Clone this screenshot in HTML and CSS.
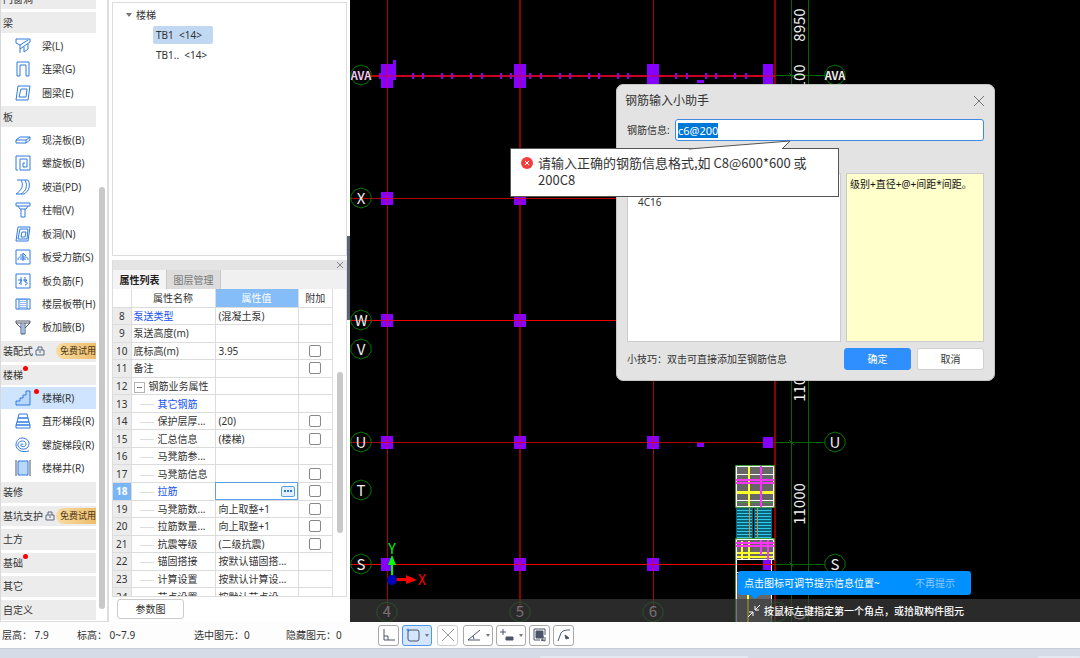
FILE: index.html
```html
<!DOCTYPE html>
<html lang="zh-CN">
  <head>
    <meta charset="UTF-8" />
    <meta name="viewport" content="width=device-width, initial-scale=1.0" />
    <title>钢筋输入小助手</title>
    <link rel="stylesheet" href="styles.css">
  </head>
  <body>
    <div class="workspace">
      <nav class="nav">
        <div class="nav-list">
          <div class="group">门窗洞</div>
          <div class="group">梁</div>
          <a class="item" href="#"><svg class="icon" viewBox="0 0 16 16"><path d="M1 5V1h14v3L5 11M1 5l4 2 8-5M5 7v8M9 9v5l4-3V6" /></svg>梁(L)</a>
          <a class="item" href="#"><svg class="icon" viewBox="0 0 16 16"><path d="M2 15V1h12v14h-3V4H5v11z" /></svg>连梁(G)</a>
          <a class="item" href="#"><svg class="icon" viewBox="0 0 16 16"><path d="M3 1h12l-2 14H1zM6 4h6l-1 8H4z" /></svg>圈梁(E)</a>
          <div class="group">板</div>
          <a class="item" href="#"><svg class="icon" viewBox="0 0 16 16"><path d="M1 8l4-3h10v3l-4 3H1zM1 8h10v3M11 8l4-3" /></svg>现浇板(B)</a>
          <a class="item" href="#"><svg class="icon" viewBox="0 0 16 16"><path d="M3 15H1V1h14v14H5V4h7v8H8V8h2" /></svg>螺旋板(B)</a>
          <a class="item" href="#"><svg class="icon" viewBox="0 0 16 16"><path d="M2 1h4c3 5 1 10-5 14h5c5-3 7-8 4-14H6M10 1h3c3 5 1 11-4 14H6" /></svg>坡道(PD)</a>
          <a class="item" href="#"><svg class="icon" viewBox="0 0 16 16"><path d="M1 1h14v3H1zM3 4l2 3h6l2-3M6 7v8h4V7" /></svg>柱帽(V)</a>
          <a class="item" href="#"><svg class="icon" viewBox="0 0 16 16"><path d="M3 1h12l-2 14H1zM5 3h8l-1 10H3zM7 6h4l-1 5H6z" /></svg>板洞(N)</a>
          <a class="item" href="#"><svg class="icon" viewBox="0 0 16 16"><path d="M1 1h14v14H1zM3 11c0-3 2-3 3-3h4c1 0 3 0 3 3M5 6h3M8 4v8M8 4l3 3M5 10h6" /></svg>板受力筋(S)</a>
          <a class="item" href="#"><svg class="icon" viewBox="0 0 16 16"><path d="M1 1h14v14H1zM3 7h4l-3 4M6 4v8M8 7h4l-2 2M10 4v5c3 0 3 2 0 3" /></svg>板负筋(F)</a>
          <a class="item" href="#"><svg class="icon" viewBox="0 0 16 16"><path d="M1 3h14v10H1zM4 3v10M12 3v10" /><path d="M8 3v10M6 3v10M10 3v10" stroke-dasharray="1 1" /></svg>楼层板带(H)</a>
          <a class="item" href="#"><svg class="icon dark" viewBox="0 0 16 16"><path d="M1 4V2h14v2l-5 5M1 4l5 5M1 4h14M6 4v11h4V4" /><path class="blue" d="M8 5v10" /></svg>板加腋(B)</a>
          <div class="group">装配式<svg class="lock" viewBox="0 0 10 10"><path d="M1 4h8v5H1zM3 4V1h4v3M5 5v2" /></svg><span class="trial">免费试用</span></div>
          <div class="group">楼梯<i class="dot"></i></div>
          <a class="item active" href="#"><svg class="icon" viewBox="0 0 16 16"><path class="fill" d="M1 15v-4h4V8h3V5h3V1h4v14z" /></svg>楼梯(R)<i class="dot"></i></a>
          <a class="item" href="#"><svg class="icon" viewBox="0 0 16 16"><path d="M4 1h8l1 4H3zM3 5h10l1 4H2zM2 9h12l1 3H1zM1 12h14v3H1z" /></svg>直形梯段(R)</a>
          <a class="item" href="#"><svg class="icon" viewBox="0 0 16 16"><path d="M8 8c0-2-3-1-2 1 1 1 5 1 5-2 0-4-7-4-8 0-1 5 7 7 10 3 3-5-1-9-6-9C3 1 1 5 1 8c0 5 6 8 13 6" /></svg>螺旋梯段(R)</a>
          <a class="item" href="#"><svg class="icon" viewBox="0 0 16 16"><path class="fill" d="M3 1h10v14H3z" /><path class="edge" d="M1 0v16M15 0v16" /></svg>楼梯井(R)</a>
          <div class="group">装修</div>
          <div class="group">基坑支护<svg class="lock" viewBox="0 0 10 10"><path d="M1 4h8v5H1zM3 4V1h4v3M5 5v2" /></svg><span class="trial">免费试用</span></div>
          <div class="group">土方</div>
          <div class="group">基础<i class="dot"></i></div>
          <div class="group">其它</div>
          <div class="group">自定义</div>
        </div>
        <div class="scrollbar"></div>
      </nav>

      <aside class="side">
        <div class="tree">
          <div class="tree-root"><i class="caret"></i>楼梯</div>
          <div><a class="tree-item selected" href="#">TB1 &nbsp;&lt;14&gt;</a></div>
          <div><a class="tree-item" href="#">TB1.. &nbsp;&lt;14&gt;</a></div>
        </div>

        <section class="dock">
          <div class="dock-bar">
            <button class="dock-close" aria-label="关闭"><svg viewBox="0 0 6 6"><path d="M0 0l6 6M6 0L0 6" /></svg></button>
          </div>
          <div class="tabs">
            <button class="tab current">属性列表</button>
            <button class="tab">图层管理</button>
          </div>
          <div class="grid-wrap">
            <table class="props">
              <colgroup><col class="c-num"><col class="c-name"><col class="c-value"><col class="c-add"></colgroup>
              <thead>
                <tr><th></th><th>属性名称</th><th class="hot">属性值</th><th>附加</th></tr>
              </thead>
              <tbody>
                <tr><td>8</td><td class="link">泵送类型</td><td>(混凝土泵)</td><td></td></tr>
                <tr><td>9</td><td>泵送高度(m)</td><td></td><td></td></tr>
                <tr><td>10</td><td>底标高(m)</td><td>3.95</td><td><input type="checkbox" aria-label="底标高附加"></td></tr>
                <tr><td>11</td><td>备注</td><td></td><td><input type="checkbox" aria-label="备注附加"></td></tr>
                <tr><td>12</td><td><i class="minus"></i>钢筋业务属性</td><td></td><td></td></tr>
                <tr class="sub"><td>13</td><td class="link">其它钢筋</td><td></td><td></td></tr>
                <tr class="sub"><td>14</td><td>保护层厚...</td><td>(20)</td><td><input type="checkbox" aria-label="保护层厚附加"></td></tr>
                <tr class="sub"><td>15</td><td>汇总信息</td><td>(楼梯)</td><td><input type="checkbox" aria-label="汇总信息附加"></td></tr>
                <tr class="sub"><td>16</td><td>马凳筋参...</td><td></td><td></td></tr>
                <tr class="sub"><td>17</td><td>马凳筋信息</td><td></td><td><input type="checkbox" aria-label="马凳筋信息附加"></td></tr>
                <tr class="sub editing"><td>18</td><td class="link">拉筋</td><td><button class="more" aria-label="更多"><i></i><i></i><i></i></button></td><td><input type="checkbox" aria-label="拉筋附加"></td></tr>
                <tr class="sub"><td>19</td><td>马凳筋数...</td><td>向上取整+1</td><td><input type="checkbox" aria-label="马凳筋数量附加"></td></tr>
                <tr class="sub"><td>20</td><td>拉筋数量...</td><td>向上取整+1</td><td><input type="checkbox" aria-label="拉筋数量附加"></td></tr>
                <tr class="sub"><td>21</td><td>抗震等级</td><td>(二级抗震)</td><td><input type="checkbox" aria-label="抗震等级附加"></td></tr>
                <tr class="sub"><td>22</td><td>锚固搭接</td><td>按默认锚固搭...</td><td></td></tr>
                <tr class="sub"><td>23</td><td>计算设置</td><td>按默认计算设...</td><td></td></tr>
                <tr class="sub"><td>24</td><td>节点设置</td><td>按默认节点设...</td><td></td></tr>
              </tbody>
            </table>
            <div class="scrollbar"></div>
          </div>
        </section>
        <button class="param-btn">参数图</button>
        <div class="splitter"></div>
      </aside>

      <main class="canvas">
        <svg class="drawing" width="100%" height="100%">
          <!-- axis grid -->
          <g class="axis">
            <path d="M37.5 0V612" />
            <path d="M303.5 0V612" />
            <path class="wide" d="M170 0V612M425 0V622" />
            <path d="M0 198.5H425M0 442.5H425" />
            <path class="bright" d="M0 320.5H425M0 564.5H425" />
            <path class="main" d="M20 76H425" />
          </g>
          <g class="dim-lines">
            <path d="M441.5 0V622M458.5 0V622M425 75.5H475M425 442.5H475M425 564.5H475M439 440l5 5M439 562l5 5M439 73l5 5" />
          </g>
          <!-- columns -->
          <g class="column">
            <path d="M31 64h12v24H31zM164 64h12v24h-12zM297 64h12v24h-12zM413 64h10v24h-10zM43 60h3v20h-3z" />
            <path d="M31 192h12v13H31zM164 192h12v13h-12zM31 314h12v13H31zM164 314h12v13h-12z" />
            <path d="M31 436h12v13H31zM164 436h12v13h-12zM297 436h12v13h-12zM413 437h10v11h-10zM347 443h7v4h-7z" />
            <path d="M31 558h12v13H31zM164 558h12v13h-12zM297 558h12v13h-12zM347 80h7v3h-7z" />
            <path d="M29 73h2v6h-2zM62 73h2v6h-2zM72 73h2v6h-2zM91 73h2v6h-2zM101 73h2v6h-2zM120 73h2v6h-2zM131 73h2v6h-2zM150 73h2v6h-2zM160 73h2v6h-2zM179 73h2v6h-2zM190 73h2v6h-2zM209 73h2v6h-2zM219 73h2v6h-2zM238 73h2v6h-2zM248 73h2v6h-2zM267 73h2v6h-2zM277 73h2v6h-2zM325 73h2v6h-2zM336 73h2v6h-2zM355 73h2v6h-2zM365 73h2v6h-2zM384 73h2v6h-2zM395 73h2v6h-2z" />
          </g>
          <path class="over" d="M29 76H425M37.5 64V88M170 64V88M31 198.5h12M164 198.5h12M31 320.5h12M164 320.5h12M31 442.5h12M164 442.5h12M297 442.5h12M164 564.5h12M297 564.5h12M37.5 192v13M170 192v13M37.5 314v13M170 314v13M37.5 436v13M170 436v13M303.5 436v13M170 558v13M303.5 558v13" />

          <!-- stair -->
          <path fill="#666" d="M386 466h38v41h-38zM386 540h38v20h-38zM387 574h34v48h-34z" />
          <g class="steps">
            <path fill="#0c6378" d="M386 508h17v30h-17zM404 508h18v30h-18z" />
            <path stroke="#2fc9ee" d="M387 510.500h15m3 0h16M387 513.500h15m3 0h16M387 516.500h15m3 0h16M387 519.500h15m3 0h16M387 522.500h15m3 0h16M387 525.500h15m3 0h16M387 528.500h15m3 0h16M387 531.500h15m3 0h16M387 534.500h15m3 0h16M387 537.500h15m3 0h16" />
            <path stroke="#c89040" d="M399.500 507v32M407.500 507v32" />
          </g>
          <path fill="none" stroke="#3c9a3c" d="M385.500 465.500h39v42h-39zM385.500 538.500h39v22M385.500 538.500v84M386 502.500h38" />
          <path fill="none" stroke="#fff" d="M386.500 466.500h37v40h-37zM387 474.500h36M387 500.500h36M386.500 539.500h37v20h-37zM386.500 560v62M421.500 560v62M387 572.500h34" />
          <path fill="none" stroke="#ffff2b" stroke-width="2" d="M399 467v39M392 541v18M399 541v18M387 553h36M387 557h36M398 594v28" />
          <path stroke="#ffff2b" stroke-width="3" d="M387 492.500h36" />
          <path fill="none" stroke="#f3f" stroke-width="2" d="M386 480h38M386 483h38M411 466v41M386 543h38M386 546h38M411 540v15M418 540v20" />
          <path fill="#8400ff" d="M413 560h8v10h-8z" />
          <path stroke="#f00000" d="M387 564.500h38" />

          <!-- axis bubbles -->
          <g class="bubble">
            <path d="M11 65l6 2 4 5v6l-4 5-6 2-6-2-4-5v-6l4-5zM11 188l6 2 4 5v6l-4 5-6 2-6-2-4-5v-6l4-5zM11 310l6 2 4 5v6l-4 5-6 2-6-2-4-5v-6l4-5zM11 339l6 2 4 5v6l-4 5-6 2-6-2-4-5v-6l4-5zM11 432l6 2 4 5v6l-4 5-6 2-6-2-4-5v-6l4-5zM11 480l6 2 4 5v6l-4 5-6 2-6-2-4-5v-6l4-5zM11 554l6 2 4 5v6l-4 5-6 2-6-2-4-5v-6l4-5z" />
            <path d="M485 65l6 2 4 5v6l-4 5-6 2-6-2-4-5v-6l4-5zM485 432l6 2 4 5v6l-4 5-6 2-6-2-4-5v-6l4-5zM485 554l6 2 4 5v6l-4 5-6 2-6-2-4-5v-6l4-5z" />
            <path d="M37 602l6 2 4 5v6l-4 5-6 2-6-2-4-5v-6l4-5zM170 602l6 2 4 5v6l-4 5-6 2-6-2-4-5v-6l4-5zM303 602l6 2 4 5v6l-4 5-6 2-6-2-4-5v-6l4-5zM427 602l6 2 4 5v6l-4 5-6 2-6-2-4-5v-6l4-5z" />
          </g>
          <g class="mark">
            <text x="11" y="80" class="merged pink">AVA</text>
            <text x="11" y="204">X</text>
            <text x="11" y="326">W</text>
            <text x="11" y="355">V</text>
            <text x="11" y="448">U</text>
            <text x="11" y="496">T</text>
            <text x="11" y="570">S</text>
            <text x="485" y="80" class="merged">AVA</text>
            <text x="485" y="448">U</text>
            <text x="485" y="570">S</text>
            <text x="37" y="617">4</text>
            <text x="170" y="617">5</text>
            <text x="303" y="617">6</text>
            <text transform="translate(455 25) rotate(-90)">8950</text>
            <text transform="translate(455 81) rotate(-90)">5100</text>
            <text transform="translate(455 381) rotate(-90)">11000</text>
            <text transform="translate(455 504) rotate(-90)">11000</text>
            <text transform="translate(455 616) rotate(-90)">0</text>
          </g>

          <!-- ucs -->
          <path fill="#0f0" d="M41 576v-11h-3l4-10 4 10h-3v11z" />
          <path fill="#f00" d="M46 578h10v-3l11 5-11 4v-3H46z" />
          <circle cx="42" cy="580" r="5" fill="#00b" />
          <text class="ucs" x="42" y="554" fill="#0f0">Y</text>
          <text class="ucs" x="72" y="585" fill="#f00">X</text>
        </svg>

        <div class="prompt">
          <svg class="prompt-icon" viewBox="0 0 14 14"><path d="M13 1L8 6M8 2v4h4M1 13l5-5M2 8h4v4" /></svg>
          按鼠标左键指定第一个角点，或拾取构件图元
        </div>
        <div class="tip">点击图标可调节提示信息位置~<button class="tip-off">不再提示</button></div>

        <form class="dialog">
          <header class="dialog-head">
            <h1>钢筋输入小助手</h1>
            <button type="button" class="dialog-close" aria-label="关闭"><svg viewBox="0 0 10 10"><path d="M0 0l10 10M10 0L0 10" /></svg></button>
          </header>
          <div class="field">
            <label for="rebar">钢筋信息:</label>
            <input type="text" id="rebar" value="c6@200" autocomplete="off" spellcheck="false">
          </div>
          <div class="panes">
            <div class="history">4C16</div>
            <div class="hint">级别+直径+@+间距*间距。</div>
          </div>
          <footer class="dialog-foot">
            <p>小技巧：双击可直接添加至钢筋信息</p>
            <button type="button" class="btn primary">确定</button>
            <button type="button" class="btn">取消</button>
          </footer>
        </form>

        <div class="callout" role="alert">
          <svg class="callout-tail" viewBox="0 0 102 10"><path d="M0 9L101 1L93 9" /></svg>
          <svg class="error" viewBox="0 0 14 14"><circle cx="7" cy="7" r="6" /><path d="M5 5l4 4M9 5l-4 4" /></svg>
          <p>请输入正确的钢筋信息格式,如 C8@600*600 或<br>200C8</p>
        </div>
      </main>
    </div>

    <footer class="status">
      <span>层高： 7.9</span>
      <span>标高： 0~7.9</span>
      <span>选中图元：0</span>
      <span>隐藏图元：0</span>
      <div class="tools">
        <button class="tool" aria-label="正交"><svg viewBox="0 0 14 14"><path d="M2 1v11h11M2 8h4v4" /></svg></button>
        <button class="tool drop on" aria-label="捕捉"><svg viewBox="0 0 14 14"><rect x="2" y="2" width="11" height="11" rx="2" /><circle cx="2" cy="2" r="1" stroke="#1b7cf0" /></svg><i class="caret"></i></button>
        <button class="tool off" aria-label="交点"><svg viewBox="0 0 14 14"><path d="M1 1l12 12M13 1L1 13" /></svg></button>
        <button class="tool drop" aria-label="角度"><svg viewBox="0 0 14 14"><path d="M13 2L1 12h12M6 8l1 3" /></svg><i class="caret"></i></button>
        <button class="tool drop" aria-label="偏移"><svg viewBox="0 0 14 14"><path d="M0 4h6M3 1v6" /><path fill="#4a5568" d="M6 9h7v3H6z" /></svg><i class="caret"></i></button>
        <button class="tool" aria-label="图层"><svg viewBox="0 0 14 14"><path fill="#4a5568" d="M3 3h7v7H3z" /><path d="M1 1h11v6M1 1v11h6M10 8v4H8l4 1v-4" /></svg></button>
        <button class="tool" aria-label="多段线"><svg viewBox="0 0 14 14"><path d="M1 13L4 5c2-3 6-3 9-3" /><path fill="#4a5568" d="M8 7l4 3-3 1z" /></svg></button>
      </div>
    </footer>
    <div class="taskbar"><i class="task"></i><i class="task small"></i></div>

    <script>
      const rebar = document.getElementById("rebar");
      rebar.focus();
      rebar.select();
    </script>
  </body>
</html>
```
FILE: styles.css
```css
* {
  box-sizing: border-box;
}
body {
  margin: 0;
  height: 100vh;
  display: flex;
  flex-direction: column;
  overflow: hidden;
  background: #fff;
  color: #333;
  font: 10px/16px "Noto Sans", "Noto Sans CJK SC", sans-serif;
}
button,
input {
  font: inherit;
  color: inherit;
  margin: 0;
  padding: 0;
}
a {
  color: inherit;
  text-decoration: none;
}
p,
h1 {
  margin: 0;
  font-weight: normal;
}
svg {
  fill: none;
  flex: none;
}
.workspace {
  flex: 1;
  min-height: 0;
  display: flex;
}

/* component navigation */
.nav {
  width: 109px;
  display: flex;
  overflow: hidden;
  border-left: 1px solid #d8d8d8;
  border-right: 2px solid #dedede;
  border-bottom: 1px solid #dedede;
}
.nav-list {
  width: 95px;
  margin-top: -13px;
  display: grid;
  grid-auto-rows: minmax(0, 1fr);
}
.group,
.item {
  display: flex;
  align-items: center;
  white-space: nowrap;
}
.group {
  margin: 2px 0 1px;
  padding-left: 2px;
  background: #ececec;
  overflow: hidden;
}
.item {
  padding-left: 14px;
}
.item.active {
  margin: 1px 0;
  background: #cfe5ff;
}
.icon {
  width: 16px;
  height: 16px;
  margin-right: 11px;
  stroke: #2f7be0;
}
.icon .fill {
  fill: #b9d7fa;
}
.icon.dark,
.icon .edge {
  stroke: #4a5568;
}
.icon .blue {
  stroke: #2f7be0;
}
.lock {
  width: 10px;
  height: 10px;
  margin-left: 2px;
  stroke: #5b6b85;
}
.trial {
  margin-left: auto;
  padding-left: 4px;
  border-radius: 8px 0 0 8px;
  background: linear-gradient(90deg, #f8dca0, #ecbd6c);
  color: #4b3516;
  font-size: 9px;
}
.dot {
  width: 5px;
  height: 5px;
  margin-bottom: 12px;
  border-radius: 50%;
  background: #f00;
}
.item .dot {
  order: -1;
  margin: 0 -24px 13px 19px;
  z-index: 1;
}
.scrollbar {
  width: 6px;
  border-radius: 3px;
  background: #c8c8c8;
}
.nav .scrollbar {
  margin: 187px 0 12px 3px;
}

/* tree and property list */
.side {
  position: relative;
  width: 241px;
  padding: 2px 3px 3px;
  display: flex;
  flex-direction: column;
}
.tree {
  height: 254px;
  padding-top: 3px;
  border: 1px solid #ddd;
  line-height: 18px;
}
.tree-root {
  display: flex;
  align-items: center;
  gap: 4px;
  padding-left: 13px;
  margin-bottom: 2px;
}
.caret {
  width: 0;
  border: 3px solid transparent;
  border-top: 4px solid #777;
  border-bottom: 0;
}
.tree-item {
  display: inline-block;
  margin: 0 0 2px 40px;
  padding: 0 3px;
  border-radius: 2px;
}
.tree-item.selected {
  min-width: 60px;
  background: #c0d8f2;
}
.dock {
  flex: 1;
  min-height: 0;
  margin: 4px 0 2px;
  display: flex;
  flex-direction: column;
  border: 1px solid #ddd;
  border-top: 0;
}
.dock-bar {
  height: 10px;
  display: flex;
  justify-content: flex-end;
  align-items: center;
  padding-right: 3px;
  background: #e4e4e4;
}
.dock-close {
  width: 6px;
  height: 6px;
  display: flex;
  border: 0;
  background: none;
}
.dock-close svg {
  width: 6px;
  height: 6px;
  stroke: #888;
}
.tabs {
  display: flex;
  background: #f0f0f0;
}
.tab {
  width: 54px;
  height: 19px;
  border: 0;
  border-right: 1px solid #c8c8c8;
  background: #dcdcdc;
  color: #777;
}
.tab.current {
  background: #f4f4f4;
  color: #222;
  font-weight: bold;
}
.grid-wrap {
  flex: 1;
  min-height: 0;
  overflow: hidden;
  display: flex;
  align-items: flex-start;
}
.props {
  width: 220px;
  height: calc(100% + 10px);
  table-layout: fixed;
  border-collapse: collapse;
  line-height: 14px;
}
.c-num {
  width: 18px;
}
.c-name {
  width: 84px;
}
.c-value {
  width: 83px;
}
.props th,
.props td {
  padding: 0 3px;
  border: solid #dcdcdc;
  border-width: 0 1px 1px 0;
  text-align: left;
  white-space: nowrap;
}
.props th {
  height: 18px;
  font-weight: normal;
  text-align: center;
}
.props th.hot {
  background: #85bdf8;
  color: #fff;
}
.props td:first-child {
  padding: 0;
  background: #ececec;
  text-align: center;
}
.props td:nth-child(2) {
  padding-left: 2px;
}
.props td:last-child {
  padding: 0;
  text-align: center;
}
.props td.link {
  color: #1552f0;
}
.props .sub td:nth-child(2)::before {
  content: "";
  display: inline-block;
  width: 14px;
  margin: 0 4px 0 6px;
  border-top: 1px solid #ddd;
  vertical-align: middle;
}
.minus {
  display: inline-block;
  width: 11px;
  height: 11px;
  margin-right: 4px;
  border: 1px solid #b4b4b4;
  background: linear-gradient(#777, #777) center / 5px 1px no-repeat;
  vertical-align: middle;
}
.props input {
  appearance: none;
  display: block;
  width: 12px;
  height: 12px;
  margin: 0 auto;
  border: 1px solid #888;
  border-radius: 2px;
  background: #fff;
}
.props .editing td:first-child {
  background: #7ab5f5;
  color: #fff;
  font-weight: bold;
}
.props .editing td:nth-child(3) {
  outline: 1px solid #5b9fe8;
  outline-offset: -1px;
}
.more {
  width: 14px;
  height: 11px;
  margin-left: auto;
  display: flex;
  justify-content: center;
  align-items: center;
  gap: 1px;
  border: 1px solid #5b9fe8;
  border-radius: 2px;
  background: #e3f0ff;
}
.more i {
  width: 2px;
  height: 2px;
  background: #2b74d8;
}
.grid-wrap .scrollbar {
  height: 161px;
  margin: 83px 0 0 4px;
}
.param-btn {
  width: 67px;
  height: 20px;
  margin-left: 5px;
  border: 1px solid #ccc;
  border-radius: 3px;
  background: #fff;
}
.splitter {
  position: absolute;
  right: 0;
  top: 236px;
  width: 3px;
  height: 84px;
  background: #5b6472;
}

/* drawing area */
.canvas {
  position: relative;
  flex: 1;
  min-width: 0;
  overflow: hidden;
  background: #000;
}
.drawing {
  display: block;
}
.axis path {
  stroke: #b00000;
}
.axis .wide {
  stroke: #8c0000;
  stroke-width: 2;
}
.axis .bright {
  stroke: #f00000;
}
.axis .main {
  stroke: #c80000;
  stroke-width: 2;
}
.dim-lines path {
  stroke: #006400;
}
.column {
  fill: #8400ff;
}
.over {
  stroke: #d00040;
}
.bubble path {
  stroke: #007800;
}
.mark {
  fill: #eee;
  font-family: "Noto Sans CJK SC", sans-serif;
  font-size: 15px;
  text-anchor: middle;
}
.mark .merged {
  font-size: 11px;
  font-weight: bold;
}
.mark .pink {
  fill: #f0c8f0;
}
.ucs {
  font-family: "Noto Sans CJK SC", sans-serif;
  font-size: 14px;
  text-anchor: middle;
}
.prompt {
  position: absolute;
  inset: auto 0 0 0;
  height: 23px;
  padding-left: 397px;
  display: flex;
  align-items: center;
  gap: 3px;
  background: rgba(60, 60, 60, 0.7);
  color: #fff;
  font-weight: 500;
  white-space: nowrap;
}
.prompt-icon {
  width: 14px;
  height: 14px;
  stroke: #fff;
}
.tip {
  position: absolute;
  left: 388px;
  bottom: 27px;
  width: 233px;
  height: 24px;
  padding: 0 16px 0 6px;
  display: flex;
  align-items: center;
  justify-content: space-between;
  border-radius: 3px;
  background: #0090ff;
  color: #fff;
  white-space: nowrap;
}
.tip::after {
  content: "";
  position: absolute;
  left: 12px;
  top: 24px;
  border: 5px solid transparent;
  border-top: 4px solid #0090ff;
  border-bottom: 0;
}
.tip-off {
  border: 0;
  background: none;
  color: #8cc8ff;
}

/* rebar input dialog */
.dialog {
  position: absolute;
  left: 266px;
  top: 84px;
  width: 379px;
  padding: 8px 10px 10px;
  border: 1px solid #c4c4c4;
  border-radius: 7px;
  background: #e3e3e3;
}
.dialog-head {
  display: flex;
  justify-content: space-between;
  align-items: center;
  height: 16px;
  margin-left: -2px;
}
.dialog-head h1 {
  font-size: 12px;
}
.dialog-close {
  width: 10px;
  height: 10px;
  display: flex;
  border: 0;
  background: none;
}
.dialog-close svg {
  width: 10px;
  height: 10px;
  overflow: visible;
  stroke: #777;
}
.field {
  display: flex;
  align-items: center;
  gap: 5px;
  margin: 10px 0 32px;
}
.field label {
  width: 43px;
  white-space: nowrap;
}
.field input {
  flex: 1;
  min-width: 0;
  height: 22px;
  padding: 0 2px;
  border: 1px solid #3d8ae0;
  border-radius: 3px;
  outline: none;
  background: #fff;
  font-size: 11px;
}
.field input::selection {
  background: #0078d7;
  color: #fff;
}
.panes {
  display: grid;
  grid-template-columns: 214px 1fr;
  gap: 5px;
}
.history,
.hint {
  height: 169px;
  border: 1px solid #ccc;
  background: #fff;
}
.history {
  padding: 20px 10px;
}
.hint {
  padding: 2px 3px;
  background: #ffffcc;
  color: #111;
  white-space: nowrap;
}
.dialog-foot {
  display: flex;
  align-items: center;
  gap: 6px;
  margin-top: 6px;
}
.dialog-foot p {
  flex: 1;
}
.btn {
  width: 67px;
  height: 22px;
  border: 1px solid #d0d0d0;
  border-radius: 3px;
  background: #fff;
}
.btn.primary {
  border-color: #2f8fff;
  background: #2f8fff;
  color: #fff;
}
.callout {
  position: absolute;
  left: 160px;
  top: 148px;
  width: 329px;
  height: 49px;
  padding: 5px 9px;
  display: flex;
  gap: 4px;
  border: 1px solid #555;
  background: #fff;
  font-family: "Noto Sans CJK SC", sans-serif;
  font-size: 13px;
  line-height: 17px;
  white-space: nowrap;
}
.callout-tail {
  position: absolute;
  left: 178px;
  top: -9px;
  width: 102px;
  height: 10px;
  fill: #fff;
  stroke: #555;
}
.error {
  width: 14px;
  height: 14px;
  margin-top: 2px;
}
.error circle {
  fill: #f04040;
}
.error path {
  stroke: #fff;
}

/* status bar */
.status {
  height: 26px;
  padding-left: 2px;
  display: flex;
  align-items: center;
  background: #fdfdfd;
  white-space: nowrap;
}
.status span {
  min-width: 75px;
}
.status span:nth-child(2) {
  min-width: 117px;
}
.status span:nth-child(3),
.status span:nth-child(4) {
  min-width: 92px;
}
.tools {
  display: flex;
  gap: 3px;
}
.tool {
  width: 21px;
  height: 21px;
  display: flex;
  align-items: center;
  justify-content: center;
  border: 1px solid #a8a8a8;
  border-radius: 3px;
  background: #fff;
}
.tool svg {
  width: 14px;
  height: 14px;
  stroke: #4a5568;
}
.tool.drop {
  width: 30px;
  gap: 5px;
}
.tool .caret {
  border-width: 3px 2px 0;
}
.tool.on {
  border-color: #4a96f0;
  background: #d3e6fd;
}
.tool.off {
  margin: 0 2px;
  border-color: #ccc;
}
.tool.off svg {
  stroke: #999;
}
.taskbar {
  height: 10px;
  display: flex;
  align-items: flex-end;
  justify-content: space-between;
  padding-left: 50%;
  border-top: 1px solid #c8cdd6;
  background: #d5dce7;
}
.task {
  width: 208px;
  height: 2px;
  border-radius: 2px 2px 0 0;
  background: #e4e8f0;
}
.task.small {
  width: 42px;
}
```
